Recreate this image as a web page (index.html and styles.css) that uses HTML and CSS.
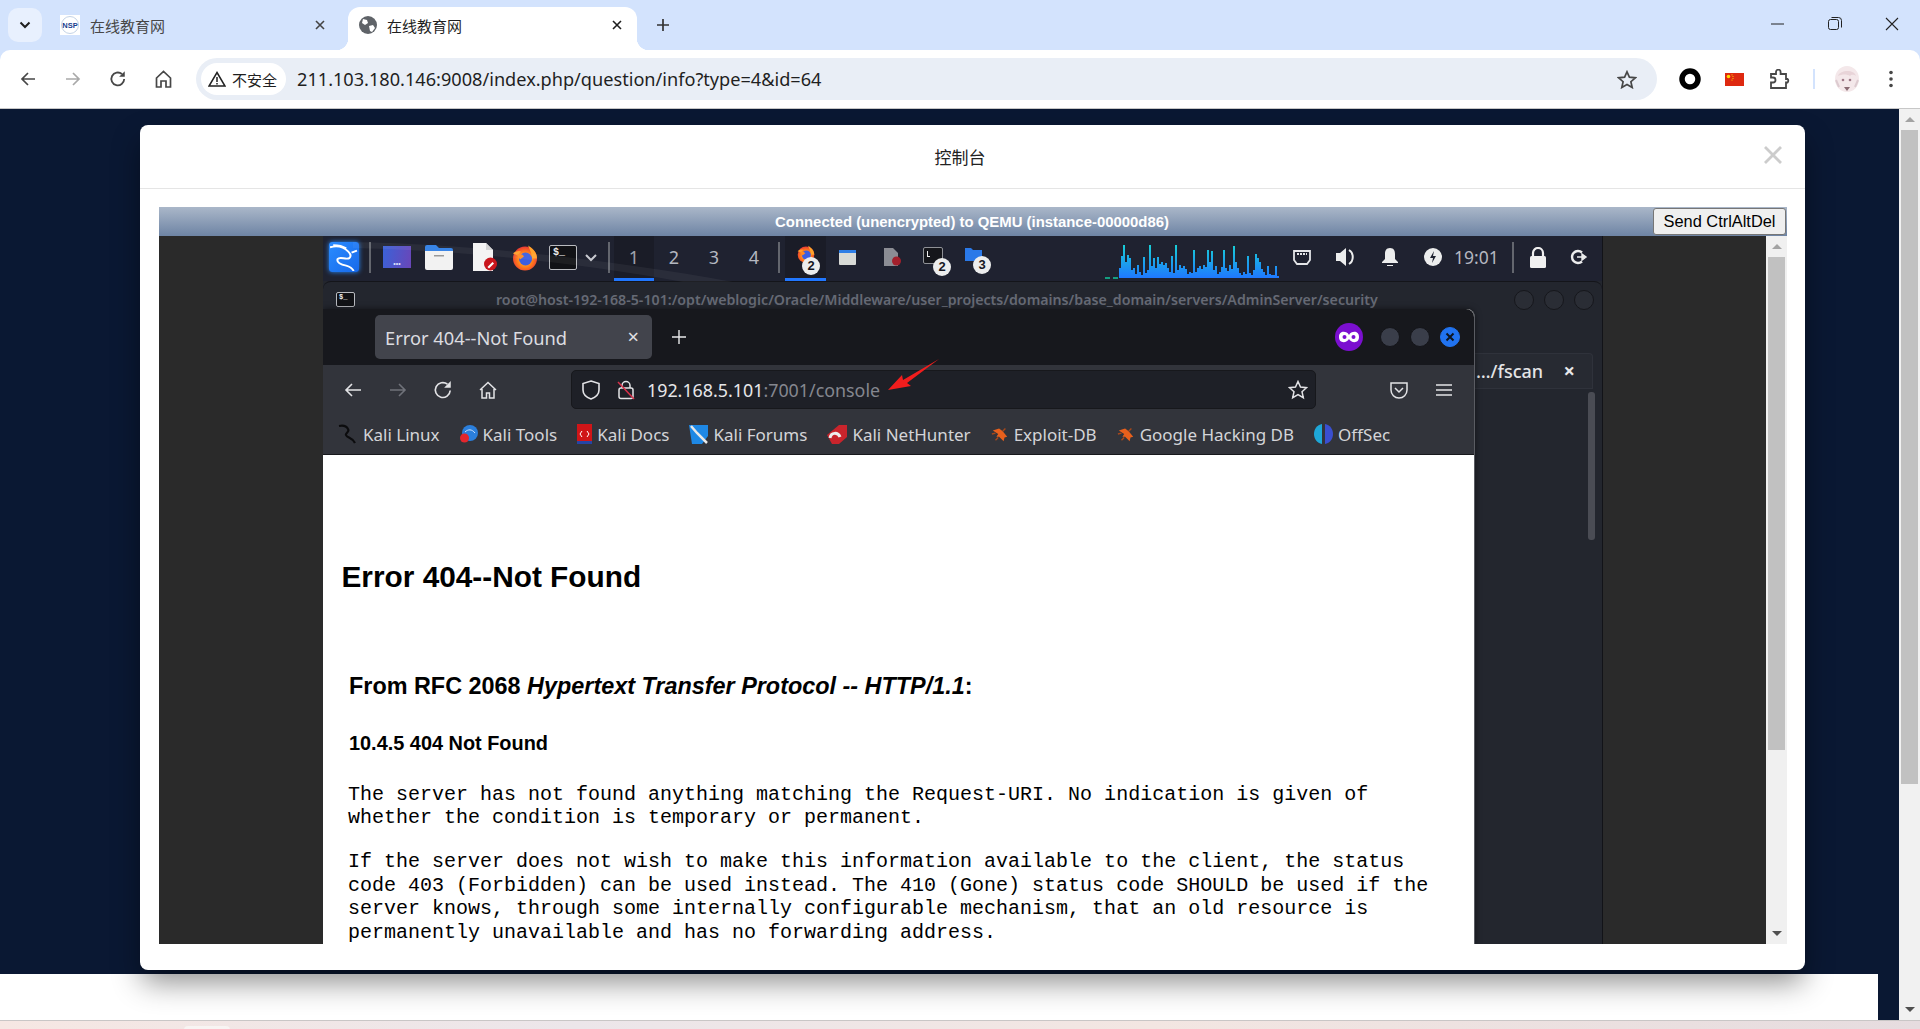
FILE: index.html
```html
<!DOCTYPE html>
<html lang="zh">
<head>
<meta charset="utf-8">
<title>在线教育网</title>
<link rel="stylesheet" href="styles.css">
</head>
<body>
<svg class="defs" width="0" height="0" aria-hidden="true">
  <defs>
    <radialGradient id="ffg" cx="0.5" cy="0.55" r="0.6">
      <stop offset="0" stop-color="#ffd43a"/><stop offset="0.55" stop-color="#ff7a1a"/><stop offset="1" stop-color="#e5283c"/>
    </radialGradient>
    <linearGradient id="bar" gradientUnits="userSpaceOnUse" x1="0" y1="0" x2="0" y2="33">
      <stop offset="0" stop-color="#18cfd6"/><stop offset="1" stop-color="#1f78ff"/>
    </linearGradient>
    <symbol id="ff" viewBox="0 0 26 26">
      <circle cx="13" cy="14" r="12" fill="url(#ffg)"/>
      <path d="M16 1c5 3 9 7 9 13h-5c0-5-2-8-4-13z" fill="#ffa32b"/>
      <path d="M1 9c2-2 5-3 8-2l-3 4z" fill="#ff9d2b"/>
      <circle cx="13.500" cy="14.500" r="6.500" fill="#3c5ee0"/>
      <path d="M5 10c3-1 6 0 7 2l-4 3z" fill="#ff8a22"/>
    </symbol>
    <symbol id="knife" viewBox="0 0 20 20">
      <path d="M2 6l7-2 4 3 5 6-3 1-1 4-5-5-3 0 2-3z" fill="#e8601c"/>
      <path d="M5 9l-4 1M13 7l3-3M8 14l-3 3" stroke="#a8481a" stroke-width="1.500" fill="none"/>
    </symbol>
  </defs>
</svg>

<div class="chrome-top">
<div class="tabstrip">
  <button class="tablist" aria-label="tabs">
    <svg width="12" height="8" viewBox="0 0 12 8"><path d="M1.500 1.500L6 6l4.500-4.500" fill="none" stroke="#1f1f1f" stroke-width="2"/></svg>
  </button>
  <div class="tab">
    <svg class="favicon" width="20" height="20" viewBox="0 0 20 20"><rect width="20" height="20" fill="#fff"/><circle cx="10" cy="10" r="8.500" fill="none" stroke="#c4d3e6"/><text x="10" y="13" text-anchor="middle" class="nsp">NSP</text></svg>
    <span class="tab-title">在线教育网</span>
    <svg class="tab-x" width="10" height="10" viewBox="0 0 10 10"><path d="M1 1l8 8M9 1l-8 8" stroke="#444" stroke-width="1.600"/></svg>
  </div>
  <div class="tab tab-active">
    <svg class="globe" width="18" height="18" viewBox="0 0 18 18"><circle cx="9" cy="9" r="9" fill="#5f6368"/><path d="M4 3l4 1 1 3-3 2-3-2zM10 10l4-1 2 3-3 4-2-1z" fill="#fff"/></svg>
    <span class="tab-title tab-title-active">在线教育网</span>
    <svg class="tab-x" width="10" height="10" viewBox="0 0 10 10"><path d="M1 1l8 8M9 1l-8 8" stroke="#1f1f1f" stroke-width="1.600"/></svg>
  </div>
  <div class="newtab">
    <svg width="14" height="14" viewBox="0 0 14 14"><path d="M7 1v12M1 7h12" stroke="#333" stroke-width="1.700"/></svg>
  </div>
  <div class="win-controls">
    <div class="win-btn"><svg width="13" height="2" viewBox="0 0 13 2"><path d="M0 1h13" stroke="#222" stroke-width="1"/></svg></div>
    <div class="win-btn"><svg width="14" height="14" viewBox="0 0 14 14"><rect x="0.500" y="2.500" width="10" height="10" rx="2" fill="none" stroke="#222"/><path d="M3.500 0.500h7a3 3 0 0 1 3 3v7" fill="none" stroke="#222"/></svg></div>
    <div class="win-btn"><svg width="14" height="14" viewBox="0 0 14 14"><path d="M1 1l12 12M13 1L1 13" stroke="#222" stroke-width="1.100"/></svg></div>
  </div>
</div>

<div class="toolbar">
  <div class="tb-btn"><svg width="16" height="16" viewBox="0 0 16 16"><path d="M15 8H2M8 2L2 8l6 6" fill="none" stroke="#474747" stroke-width="1.700"/></svg></div>
  <div class="tb-btn"><svg width="16" height="16" viewBox="0 0 16 16"><path d="M1 8h13M8 2l6 6-6 6" fill="none" stroke="#a9a9a9" stroke-width="1.700"/></svg></div>
  <div class="tb-btn"><svg width="18" height="18" viewBox="0 0 16 16"><path d="M13.500 8A5.700 5.700 0 1 1 11.500 3.600" fill="none" stroke="#474747" stroke-width="1.600"/><path d="M14 1v5H9z" fill="#474747"/></svg></div>
  <div class="tb-btn"><svg width="17" height="18" viewBox="0 0 17 18"><path d="M1.500 8L8.500 1.500 15.500 8v9h-4.500v-6H6v6H1.500z" fill="none" stroke="#474747" stroke-width="1.700"/></svg></div>
  <div class="omnibox">
    <div class="security">
      <svg width="18" height="16" viewBox="0 0 18 16"><path d="M9 1.500L17 15H1z" fill="none" stroke="#222" stroke-width="1.500"/><path d="M9 6v5M9 12v1.500" stroke="#222" stroke-width="1.500"/></svg>
      <span class="security-text">不安全</span>
    </div>
    <span class="url">211.103.180.146:9008/index.php/question/info?type=4&amp;id=64</span>
    <svg class="omni-star" width="20" height="19" viewBox="0 0 20 19"><path d="M10 1.800l2.400 5.400 5.900.6-4.400 3.900 1.300 5.800L10 14.500l-5.200 3 1.300-5.800L1.700 7.800l5.900-.6z" fill="none" stroke="#474747" stroke-width="1.700"/></svg>
  </div>
  <div class="tb-btn tb-first"><svg width="22" height="22" viewBox="0 0 22 22"><circle cx="11" cy="11" r="8" fill="none" stroke="#000" stroke-width="5.500"/></svg></div>
  <div class="tb-btn"><svg width="19" height="13" viewBox="0 0 19 13"><rect width="19" height="13" fill="#de2910"/><circle cx="3.500" cy="3.500" r="1.800" fill="#ffde00"/><circle cx="7" cy="1.800" r=".6" fill="#ffde00"/><circle cx="8" cy="3.500" r=".6" fill="#ffde00"/><circle cx="8" cy="5.500" r=".6" fill="#ffde00"/><circle cx="7" cy="7" r=".6" fill="#ffde00"/></svg></div>
  <div class="tb-btn"><svg width="21" height="21" viewBox="0 0 21 21"><path d="M2 5h5V3a2.300 2.300 0 0 1 4.600 0v2h5.400v5h1.500a2.300 2.300 0 0 1 0 3.500H17v5.500H2v-5.500h2a2.500 2.500 0 0 0 0-5H2z" fill="none" stroke="#474747" stroke-width="1.800"/></svg></div>
  <div class="tb-sep"><span class="tb-sep-line"></span></div>
  <div class="tb-avatar">
    <svg width="24" height="26" viewBox="0 0 24 26"><ellipse cx="12" cy="13" rx="12" ry="13" fill="#f4e8ea"/><path d="M3 10c2-6 16-7 18 0-3-2-5-1-6 0-3-2-8-2-12 0z" fill="#e8d4d8"/><circle cx="8" cy="14" r="1.300" fill="#a07a88"/><circle cx="15" cy="14" r="1.300" fill="#a07a88"/><path d="M9 21l3 4 3-4z" fill="#8a6a72"/><path d="M1 14l3 7M23 14l-3 7" stroke="#ddcbd0" stroke-width="2"/></svg>
  </div>
  <div class="tb-btn"><svg width="4" height="18" viewBox="0 0 4 18"><circle cx="2" cy="2.500" r="1.800" fill="#474747"/><circle cx="2" cy="9" r="1.800" fill="#474747"/><circle cx="2" cy="15.500" r="1.800" fill="#474747"/></svg></div>
</div>
</div>

<div class="viewport">
  <div class="page-main">
    <div class="page-navy"></div>
    <div class="page-foot"></div>

    <section class="modal">
      <header class="modal-head">
        <h1 class="modal-title">控制台</h1>
        <svg class="modal-close" width="18" height="18" viewBox="0 0 18 18"><path d="M1 1l16 16M17 1L1 17" stroke="#ccc" stroke-width="2.800"/></svg>
      </header>
      <div class="modal-body">
        <div class="console">
          <div class="console-bar">
            <span class="console-status">Connected (unencrypted) to QEMU (instance-00000d86)</span>
            <button class="cad">Send CtrlAltDel</button>
          </div>
          <div class="console-stage">
            <div class="screen">
              <svg class="swoosh" width="420" height="46" viewBox="0 0 420 46"><path d="M0 6C120 8 260 24 380 46H330C230 28 110 14 0 12z" fill="#fff" opacity=".05"/></svg>
              <div class="panel">
                <div class="kali-btn p-kali"><svg width="28" height="28" viewBox="0 0 26 26"><path d="M0 4c7-2 13 0 17 4 2 2 3 4 1 6-3 2-9-2-11 1-1 3 3 5 8 6 4 1 6 3 7 5M3 2c5 0 9 1 12 3M20 9l5-2" fill="none" stroke="#fff" stroke-width="1.800"/></svg></div>
                <span class="p-sep p-sep1"></span>
                <div class="appmenu"><span class="appmenu-dots">•••</span></div>
                <svg class="p-folder" width="28" height="26" viewBox="0 0 28 26"><path d="M0 3a2 2 0 0 1 2-2h9l3 3h12a2 2 0 0 1 2 2v2H0z" fill="#2f7fe6"/><path d="M0 7h28v17a2 2 0 0 1-2 2H2a2 2 0 0 1-2-2z" fill="#f2f2f2"/><rect x="9" y="11" width="10" height="1.500" fill="#999"/></svg>
                <svg class="p-doc" width="26" height="28" viewBox="0 0 26 28"><path d="M1 0h13l7 7v21H1z" fill="#f4f4f4"/><path d="M14 0l7 7h-7z" fill="#d4d4d4"/><circle cx="18.500" cy="21" r="6.500" fill="#c9161d"/><path d="M15.500 24l5-5 1.500 1.500-5 5z" fill="#fff"/></svg>
                <svg class="p-ff" width="26" height="27"><use href="#ff"/></svg>
                <div class="term-icon p-term"><span class="term-prompt">$_</span></div>
                <svg class="p-chev" width="14" height="14" viewBox="0 0 14 14"><path d="M2 5l5 5 5-5" fill="none" stroke="#c8cad0" stroke-width="2"/></svg>
                <span class="p-sep p-sep2"></span>
                <div class="workspaces">
                  <span class="ws ws-active">1</span>
                  <span class="ws">2</span>
                  <span class="ws">3</span>
                  <span class="ws">4</span>
                </div>
                <span class="p-sep p-sep3"></span>
                <div class="task task-ff">
                  <svg class="task-ff-icon" width="18" height="18"><use href="#ff"/></svg>
                  <span class="badge badge-ff">2</span>
                </div>
                <svg class="t-window" width="17" height="15" viewBox="0 0 17 15"><rect width="17" height="15" rx="1" fill="#d8dad6"/><rect width="17" height="3" fill="#2f7fe6"/></svg>
                <svg class="t-doc" width="17" height="18" viewBox="0 0 17 18"><path d="M0 0h9l5 5v13H0z" fill="#8b8d94"/><circle cx="12.500" cy="13" r="4.500" fill="#a3202c"/></svg>
                <div class="task t-term">
                  <div class="term-mini"><span class="term-mini-p"></span></div>
                  <span class="badge badge-term">2</span>
                </div>
                <div class="task t-folder">
                  <svg width="17" height="14" viewBox="0 0 17 14"><path d="M0 1h6l2 2h9v11H0z" fill="#2a79e8"/></svg>
                  <span class="badge badge-folder">3</span>
                </div>
                <svg class="graph" width="175" height="34" viewBox="0 0 175 34">
                  <path d="M0 33h5M8 33h5" stroke="#12c79a" stroke-width="1.600"/>
                  <g transform="translate(14 0)">
                    <path fill="none" stroke="url(#bar)" stroke-width="2" d="M1 33v-10m2 10v-22m2 22v-33m2 33v-16m2 16v-23m2 23v-20m2 20v-8m2 8v-10m2 10v-4m2 4v-13m2 13v-6m2 6v-3m2 3v-21m2 21v-5m2 5v-8m2 8v-33m2 33v-12m2 12v-20m2 20v-10m2 10v-21m2 21v-14m2 14v-16m2 16v-13m2 13v-15m2 15v-10m2 10v-6m2 6v-22m2 22v-5m2 5v-33m2 33v-8m2 8v-13m2 13v-10m2 10v-12m2 12v-9m2 9v-4m2 4v-6m2 6v-5m2 5v-28m2 28v-6m2 6v-10m2 10v-12m2 12v-9m2 9v-13m2 13v-11m2 11v-28m2 28v-16m2 16v-27m2 27v-8m2 8v-12m2 12v-4m2 4v-6m2 6v-11m2 11v-28m2 28v-10m2 10v-7m2 7v-13m2 13v-9m2 9v-32m2 32v-16m2 16v-10m2 10v-5m2 5v-3m2 3v-6m2 6v-4m2 4v-22m2 22v-5m2 5v-3m2 3v-8m2 8v-24m2 24v-20m2 20v-16m2 16v-9m2 9v-6m2 6v-3m2 3v-12m2 12v-4m2 4v-3m2 3v-3m2 3v-12m2 12v-2"/>
                  </g>
                </svg>
                <svg class="s-net" width="18" height="15" viewBox="0 0 18 15"><path d="M1 1h16v9l-3 4H4l-3-4z" fill="none" stroke="#e4e5e8" stroke-width="1.800"/><path d="M4 4h10" stroke="#e4e5e8" stroke-width="2" stroke-dasharray="2 1"/></svg>
                <svg class="s-vol" width="22" height="20" viewBox="0 0 22 20"><path d="M0 6h4l6-5v18l-6-5H0z" fill="#eceded"/><path d="M13 3c5 3 5 11 0 14" fill="none" stroke="#eceded" stroke-width="2"/></svg>
                <svg class="s-bell" width="18" height="20" viewBox="0 0 18 20"><path d="M9 1c4 0 5 3 5 6v5l3 3v1H1v-1l3-3V7c0-3 1-6 5-6z" fill="#eceded"/><path d="M6 18h6v1H6z" fill="#eceded"/></svg>
                <svg class="s-power" width="18" height="18" viewBox="0 0 18 18"><circle cx="9" cy="9" r="9" fill="#eceded"/><path d="M10 3L6 10h3l-1 5 4-7H9z" fill="#1f2230"/></svg>
                <span class="clock">19:01</span>
                <span class="p-sep p-sep4"></span>
                <svg class="s-lock" width="16" height="21" viewBox="0 0 16 21"><path d="M3 9V6a5 5 0 0 1 10 0v3" fill="none" stroke="#f0f0f0" stroke-width="2.200"/><rect y="9" width="16" height="12" rx="1.500" fill="#f0f0f0"/></svg>
                <svg class="s-out" width="18" height="16" viewBox="0 0 18 16"><path d="M12 3.500A6 6 0 1 0 12 12.500" fill="none" stroke="#eceded" stroke-width="2.400"/><path d="M7 8h7M12 5l4 3-4 3z" fill="#eceded" stroke="#eceded" stroke-width="1.400"/></svg>
              </div>

              <div class="terminal">
                <div class="term-title">
                  <div class="term-icon term-icon-small"><span class="term-prompt term-prompt-small">$_</span></div>
                  <span class="term-title-text">root@host-192-168-5-101:/opt/weblogic/Oracle/Middleware/user_projects/domains/base_domain/servers/AdminServer/security</span>
                  <div class="term-dots">
                    <span class="term-dot"></span><span class="term-dot"></span><span class="term-dot"></span>
                  </div>
                </div>
                <div class="term-tabs">
                  <div class="term-tab"><span>…/fscan</span><span class="term-tab-x">×</span></div>
                </div>
                <span class="term-scroll"></span>
              </div>

              <div class="firefox">
                <div class="ff-tabs">
                  <div class="ff-tab"><span class="ff-tab-title">Error 404--Not Found</span><span class="ff-tab-x">×</span></div>
                  <svg class="ff-plus" width="14" height="14" viewBox="0 0 14 14"><path d="M7 0v14M0 7h14" stroke="#e8e8ea" stroke-width="1.400"/></svg>
                  <div class="ff-controls">
                    <svg class="ff-mask" width="28" height="28" viewBox="0 0 28 28"><circle cx="14" cy="14" r="14" fill="#7b0fd0"/><path d="M4 14c0-7 8-6 10-2 2-4 10-5 10 2s-8 6-10 2c-2 4-10 5-10-2z" fill="#fff"/><circle cx="9.500" cy="14" r="2" fill="#7b0fd0"/><circle cx="18.500" cy="14" r="2" fill="#7b0fd0"/></svg>
                    <span class="ff-dot"></span><span class="ff-dot"></span>
                    <span class="ff-dot ff-dot-close"><svg width="10" height="10" viewBox="0 0 10 10"><path d="M1.500 1.500l7 7M8.500 1.500l-7 7" stroke="#0d1520" stroke-width="2"/></svg></span>
                  </div>
                </div>
                <div class="ff-nav">
                  <div class="ff-btn"><svg width="18" height="16" viewBox="0 0 18 16"><path d="M17 8H2M8 2L2 8l6 6" fill="none" stroke="#e3e3e6" stroke-width="1.600"/></svg></div>
                  <div class="ff-btn"><svg width="18" height="16" viewBox="0 0 18 16"><path d="M1 8h15M10 2l6 6-6 6" fill="none" stroke="#70727a" stroke-width="1.600"/></svg></div>
                  <div class="ff-btn"><svg width="20" height="20" viewBox="0 0 18 18"><path d="M15.500 9.500A6.700 6.700 0 1 1 13 3.800" fill="none" stroke="#e3e3e6" stroke-width="1.500"/><path d="M16 1v6h-6z" fill="#e3e3e6"/></svg></div>
                  <div class="ff-btn"><svg width="18" height="18" viewBox="0 0 18 18"><path d="M1 9l8-7.500L17 9M3 8v9h4.500v-5h3v5H15V8" fill="none" stroke="#e3e3e6" stroke-width="1.500"/></svg></div>
                  <div class="ff-url">
                    <svg class="ff-shield" width="18" height="20" viewBox="0 0 18 20"><path d="M9 1l8 2.500V10c0 4.500-4 7.500-8 9-4-1.500-8-4.500-8-9V3.500z" fill="none" stroke="#e3e3e6" stroke-width="1.600"/></svg>
                    <svg class="ff-lock" width="18" height="20" viewBox="0 0 18 20"><path d="M5 8V5.500a4 4 0 0 1 8 0V8" fill="none" stroke="#e3e3e6" stroke-width="1.500"/><rect x="2" y="8" width="14" height="10.500" rx="2" fill="none" stroke="#e3e3e6" stroke-width="1.500"/><path d="M1 2l16 17" stroke="#d9304a" stroke-width="1.500"/></svg>
                    <span class="ff-host">192.168.5.101<span class="ff-port">:7001/console</span></span>
                    <svg class="ff-star" width="20" height="20" viewBox="0 0 20 20"><path d="M10 1.500l2.500 5.600 6 .6-4.500 4 1.300 6L10 14.600l-5.300 3.100 1.300-6-4.500-4 6-.6z" fill="none" stroke="#e3e3e6" stroke-width="1.500"/></svg>
                  </div>
                  <svg class="ff-pocket" width="18" height="18" viewBox="0 0 18 18"><path d="M1 2h16v7a8 8 0 0 1-16 0z" fill="none" stroke="#e3e3e6" stroke-width="1.500"/><path d="M5 7l4 4 4-4" fill="none" stroke="#e3e3e6" stroke-width="1.500"/></svg>
                  <svg class="ff-menu" width="16" height="14" viewBox="0 0 16 14"><path d="M0 2h16M0 7h16M0 12h16" stroke="#e3e3e6" stroke-width="1.600"/></svg>
                </div>
                <div class="ff-marks">
                  <div class="mark"><svg width="20" height="20" viewBox="0 0 20 20"><path d="M1 2c5-1 8 1 9 3 2 3-3 4-2 6 1 3 6 2 9 8" fill="none" stroke="#0c0c0e" stroke-width="2.200"/></svg><span>Kali Linux</span></div>
                  <div class="mark"><svg width="18" height="18" viewBox="0 0 18 18"><circle cx="10" cy="8" r="8" fill="#2b7fdc"/><path d="M5 7c3-3 7-3 10 1" fill="none" stroke="#cfe4ff"/><circle cx="4.500" cy="13" r="4.500" fill="#e3262d"/></svg><span>Kali Tools</span></div>
                  <div class="mark"><svg width="15" height="20" viewBox="0 0 15 20"><rect width="15" height="19" fill="#d01518"/><rect y="17" width="15" height="3" fill="#2545a5"/><path d="M5 7l-2 3 2 3M10 7l2 3-2 3" fill="none" stroke="#fff"/></svg><span>Kali Docs</span></div>
                  <div class="mark"><svg width="19" height="19" viewBox="0 0 19 19"><path d="M0 0h19v11l-6 8H3z" fill="#1e88e5"/><path d="M2 1l6 7 10 10" fill="none" stroke="#e8e8e8" stroke-width="2.500"/></svg><span>Kali Forums</span></div>
                  <div class="mark"><svg width="20" height="19" viewBox="0 0 20 19"><path d="M0 10L12 0h8v12L12 19H5z" fill="#c9242c"/><path d="M3 13c1-6 8-6 10-1" fill="none" stroke="#eee" stroke-width="3"/></svg><span>Kali NetHunter</span></div>
                  <div class="mark"><svg width="18" height="18"><use href="#knife"/></svg><span>Exploit-DB</span></div>
                  <div class="mark"><svg width="18" height="18"><use href="#knife"/></svg><span>Google Hacking DB</span></div>
                  <div class="mark"><svg width="19" height="20" viewBox="0 0 19 20"><path d="M8 0v20C3 19 0 15 0 10S3 1 8 0z" fill="#1ea7d8"/><path d="M11 0v20c5-1 8-5 8-10S16 1 11 0z" fill="#3a4fd0"/></svg><span>OffSec</span></div>
                </div>
                <article class="ff-page">
                  <h1 class="err-h1">Error 404--Not Found</h1>
                  <h2 class="err-h2">From RFC 2068 <em>Hypertext Transfer Protocol -- HTTP/1.1</em>:</h2>
                  <h3 class="err-h3">10.4.5 404 Not Found</h3>
                  <pre class="err-p">The server has not found anything matching the Request-URI. No indication is given of
whether the condition is temporary or permanent.</pre>
                  <pre class="err-p err-p2">If the server does not wish to make this information available to the client, the status
code 403 (Forbidden) can be used instead. The 410 (Gone) status code SHOULD be used if the
server knows, through some internally configurable mechanism, that an old resource is
permanently unavailable and has no forwarding address.</pre>
                </article>
              </div>

              <svg class="annot" width="60" height="36" viewBox="0 0 60 36"><path d="M2 32L16 17l1 5L53 1 21 25l4 3z" fill="#f21d1d"/></svg>
            </div>
            <div class="stage-scroll">
              <span class="arrow-up"></span>
              <span class="stage-thumb"></span>
              <span class="arrow-down"></span>
            </div>
          </div>
        </div>
      </div>
    </section>
  </div>
  <div class="page-scroll">
    <span class="arrow-up"></span>
    <span class="page-thumb"></span>
    <span class="arrow-down"></span>
  </div>
</div>
<div class="taskbar"><span class="taskbar-tip"></span></div>
</body>
</html>
```
FILE: styles.css
```css
* { box-sizing: border-box; }
html, body { margin: 0; padding: 0; height: 1029px; overflow: hidden; background: #fff; }
body { font-family: "Noto Sans", "Noto Sans CJK SC", sans-serif; color: #1f1f1f; }
.defs { position: absolute; }
h1, h2, h3, pre { margin: 0; }

/* Chrome tab strip */
.chrome-top { background: #d3e3fd; }
.tabstrip { height: 50px; display: flex; align-items: flex-end; }
.tablist { width: 34px; height: 34px; margin: 0 6px 8px 8px; border: 0; padding: 0; border-radius: 10px; background: #e8f0fe; display: flex; align-items: center; justify-content: center; }
.tab { width: 292px; height: 43px; display: flex; align-items: center; padding: 0 15px 7px 12px; position: relative; }
.favicon { margin-right: 10px; flex: none; }
.nsp { font: 800 7.5px "Liberation Sans", sans-serif; fill: #17408f; }
.tab-title { font-size: 15px; color: #474747; flex: 1; font-family: "Noto Sans CJK SC", sans-serif; }
.tab-title-active { color: #1f1f1f; }
.tab-x { flex: none; }
.tab-active { width: 289px; background: #fff; border-radius: 12px 12px 0 0; margin-left: 8px; padding: 0 15px 7px 11px; }
.tab-active::before, .tab-active::after { content: ""; position: absolute; bottom: 0; width: 12px; height: 12px; }
.tab-active::before { left: -12px; background: radial-gradient(circle at 0 0, #d3e3fd 12px, #fff 12.5px); }
.tab-active::after { right: -12px; background: radial-gradient(circle at 100% 0, #d3e3fd 12px, #fff 12.5px); }
.globe { margin-right: 10px; flex: none; }
.newtab { width: 52px; height: 43px; display: flex; align-items: center; justify-content: center; padding-bottom: 7px; }
.win-controls { margin-left: auto; display: flex; height: 50px; }
.win-btn { width: 57px; display: flex; align-items: center; justify-content: center; padding-bottom: 2px; }

/* Chrome toolbar */
.toolbar { height: 59px; background: #fff; border-radius: 10px 10px 0 0; border-bottom: 1px solid #c7c7c7; display: flex; align-items: center; padding-left: 5.500px; position: relative; }
.tb-btn { width: 45px; height: 42px; display: flex; align-items: center; justify-content: center; flex: none; }
.omnibox { width: 1461px; height: 42px; margin-left: 10.500px; border-radius: 21px; background: #e9eef6; display: flex; align-items: center; padding: 0 20px 0 5px; flex: none; }
.security { width: 85px; height: 32px; border-radius: 16px; background: #fff; display: flex; align-items: center; padding-left: 7px; gap: 6px; flex: none; }
.security-text { font: 15px "Noto Sans CJK SC", sans-serif; color: #1f1f1f; }
.url { margin-left: 11px; font-size: 18.150px; color: #1f1f1f; white-space: nowrap; flex: 1; }
.omni-star { flex: none; }
.tb-first { margin-left: 10px; }
.tb-sep { width: 24px; display: flex; justify-content: center; flex: none; }
.tb-sep-line { width: 2px; height: 20px; background: #d3e3fd; }
.tb-avatar { width: 42px; display: flex; justify-content: center; flex: none; }

/* Page */
.viewport { height: 911px; display: flex; }
.page-main { flex: 1; position: relative; background: #0a1833; display: flex; flex-direction: column; }
.page-navy { height: 865px; }
.page-foot { flex: 1; background: #fff; margin-right: 21px; }
.page-scroll { width: 21px; background: #f1f1f1; display: flex; flex-direction: column; align-items: center; position: relative; }
.page-thumb { position: absolute; left: 2px; top: 21px; width: 17px; height: 654px; background: #c1c1c1; }
.arrow-up, .arrow-down { position: absolute; left: 50%; margin-left: -5px; width: 0; height: 0; border-left: 5px solid transparent; border-right: 5px solid transparent; }
.arrow-up { top: 8px; border-bottom: 5px solid #a3a3a3; }
.arrow-down { bottom: 8px; border-top: 5px solid #505050; }

/* Modal */
.modal { position: absolute; left: 140px; top: 16px; width: 1665px; height: 845px; background: #fff; border-radius: 8px; box-shadow: 0 14px 30px -2px rgba(0,0,0,.45); display: flex; flex-direction: column; }
.modal-head { height: 64px; border-bottom: 1px solid #e5e5e5; display: flex; align-items: center; justify-content: center; padding-right: 25px; position: relative; }
.modal-title { font: 400 17px "Noto Sans CJK SC", sans-serif; color: #222; }
.modal-close { position: absolute; right: 23px; top: 21px; }
.modal-body { flex: 1; padding: 18px 18px 26px 19px; }
.console { height: 737px; display: flex; flex-direction: column; }
.console-bar { height: 29px; flex: none; background: linear-gradient(#aab7c9, #6e84a4); display: flex; align-items: center; justify-content: center; padding-right: 2px; position: relative; }
.console-status { font: 700 14.900px "Liberation Sans", sans-serif; color: #fff; }
.cad { position: absolute; right: 1px; top: 1px; width: 133px; height: 27px; padding: 0; font: 16.400px "Liberation Sans", sans-serif; color: #000; background: #efefef; border: 1px solid #767676; border-radius: 3px; }
.console-stage { flex: 1; display: flex; background: #2a2a2a; min-height: 0; }
.stage-scroll { width: 21px; margin-left: auto; background: #f0f0f0; position: relative; }
.stage-thumb { position: absolute; left: 2px; top: 21px; width: 17px; height: 493px; background: #c1c1c1; }

/* VNC desktop */
.screen { width: 1280px; height: 708px; margin-left: 164px; position: relative; overflow: hidden; background: #23262e; border-right: 1px solid #121318; flex: none; }
.swoosh { position: absolute; left: 30px; top: 0; z-index: 1; pointer-events: none; }
.panel { height: 45px; background: #1f2230; display: flex; align-items: center; color: #c8cad0; padding-bottom: 3px; }
.kali-btn { width: 30px; height: 30px; border-radius: 3px; background: linear-gradient(135deg, #2a8cff, #1769ea); box-shadow: 0 0 5px #2a8cff; display: flex; align-items: center; justify-content: center; flex: none; }
.p-kali { margin-left: 6px; }
.p-sep { width: 2px; height: 31px; background: #63666e; flex: none; }
.p-sep1 { margin-left: 10px; }
.appmenu { width: 28px; height: 22px; margin-left: 12px; background: linear-gradient(100deg, #3a62d8, #6a46b8); display: flex; align-items: flex-end; justify-content: center; flex: none; }
.appmenu-dots { font: 7px/8px "Liberation Sans", sans-serif; color: #dfe4ff; }
.p-folder { margin-left: 14px; flex: none; }
.p-doc { margin-left: 19px; flex: none; }
.p-ff { margin-left: 14px; flex: none; }
.term-icon { width: 28px; height: 25px; background: #111216; border: 1px solid #b9bbc0; border-radius: 2px; flex: none; }
.p-term { margin-left: 11px; }
.term-prompt { display: block; font: 700 10px/14px "Liberation Mono", monospace; color: #eee; padding-left: 3px; }
.p-chev { margin-left: 7px; flex: none; }
.p-sep2 { margin-left: 10px; }
.workspaces { display: flex; margin-left: 4px; height: 45px; flex: none; align-self: flex-start; }
.ws { width: 40px; height: 45px; display: flex; align-items: center; justify-content: center; font-size: 18px; color: #b4b7c0; padding-bottom: 3px; }
.ws-active { background: #1a1c27; border-bottom: 3px solid #2177ff; color: #9fa3ad; padding-bottom: 0; }
.p-sep3 { margin-left: 4px; }
.task { position: relative; flex: none; display: flex; }
.task-ff { width: 41px; height: 45px; margin-left: 5px; background: #1a1c27; border-bottom: 3px solid #2177ff; align-self: flex-start; }
.task-ff-icon { position: absolute; left: 12px; top: 9px; }
.badge { position: absolute; width: 18px; height: 18px; border-radius: 50%; background: #eceded; color: #16181f; font: 700 13px/18px "Liberation Sans", sans-serif; text-align: center; }
.badge-ff { left: 17px; top: 21px; }
.t-window { margin-left: 13px; flex: none; }
.t-doc { margin-left: 28px; flex: none; }
.t-term { width: 20px; height: 20px; margin-left: 22px; }
.term-mini { width: 20px; height: 17px; background: #15161b; border: 1px solid #8f9196; border-radius: 2px; position: relative; }
.term-mini-p { position: absolute; left: 3px; top: 3px; width: 3px; height: 6px; border-left: 1px solid #eee; border-bottom: 1px solid #eee; }
.badge-term { left: 10px; top: 11px; }
.t-folder { width: 17px; height: 20px; margin-left: 22px; }
.badge-folder { left: 8px; top: 9px; }
.graph { margin-left: 123px; margin-top: 9px; flex: none; }
.s-net { margin-left: 13px; flex: none; }
.s-vol { margin-left: 25px; flex: none; }
.s-bell { margin-left: 23px; flex: none; }
.s-power { margin-left: 25px; flex: none; }
.clock { margin-left: 12px; font-size: 17.500px; color: #b4b7c0; width: 42px; white-space: nowrap; flex: none; }
.p-sep4 { margin-left: 16px; }
.s-lock { margin-left: 16px; flex: none; }
.s-out { margin-left: 24px; flex: none; }

/* Terminal window, behind Firefox */
.terminal { position: absolute; left: 0; top: 45px; width: 1279px; bottom: 0; background: #23262e; border-radius: 8px 8px 0 0; border-top: 1px solid #14151a; }
.term-title { height: 37px; display: flex; align-items: center; position: relative; padding: 0 0 2px 13px; }
.term-icon-small { width: 19px; height: 15px; }
.term-prompt-small { font-size: 7px; line-height: 9px; padding-left: 2px; }
.term-title-text { position: absolute; left: 173px; top: 8px; font-size: 14.200px; font-weight: 600; color: #666a75; white-space: nowrap; }
.term-dots { position: absolute; right: 8px; top: 8px; display: flex; gap: 10px; }
.term-dot { width: 20px; height: 20px; border-radius: 50%; background: #2a2d35; border: 1px solid #16171c; }
.term-tabs { margin-top: 34px; padding-right: 9px; height: 36px; display: flex; justify-content: flex-end; }
.term-tab { width: 119px; height: 36px; background: #272a32; border: 1px solid #2f323b; border-left: 0; border-radius: 0 4px 0 0; display: flex; align-items: center; padding-left: 2px; font-size: 18px; font-weight: 500; color: #e4e4e6; }
.term-tab-x { margin-left: auto; margin-right: 17px; font-size: 20px; font-weight: 700; line-height: 1; color: #e8e8ea; }
.term-scroll { position: absolute; left: 1265px; top: 110px; width: 7px; height: 148px; border-radius: 3px; background: #4a4c54; }

/* Firefox window */
.firefox { position: absolute; left: 0; top: 73px; width: 1152px; bottom: 0; background: #fff; border-radius: 0 8px 0 0; border-right: 1px solid #5a5c62; display: flex; flex-direction: column; box-shadow: 0 0 6px rgba(0,0,0,.5); }
.ff-tabs { height: 56px; flex: none; background: #17181d; border-radius: 0 8px 0 0; display: flex; align-items: center; padding-left: 52px; }
.ff-tab { width: 277px; height: 44px; background: #42444c; border-radius: 5px; display: flex; align-items: center; padding: 0 13px 0 10px; }
.ff-tab-title { font-size: 18.300px; color: #dcdce0; white-space: nowrap; flex: 1; }
.ff-tab-x { color: #e0e0e3; font-size: 20px; line-height: 1; }
.ff-plus { margin-left: 20px; flex: none; }
.ff-controls { margin-left: auto; margin-right: 14px; display: flex; align-items: center; gap: 10px; }
.ff-mask { margin-right: 7px; }
.ff-dot { width: 20px; height: 20px; border-radius: 50%; background: #3a3e4a; border: 1px solid #14151a; }
.ff-dot-close { background: #2173f0; border-color: #2173f0; display: flex; align-items: center; justify-content: center; }
.ff-nav { height: 49px; flex: none; background: #32343b; display: flex; align-items: center; padding-left: 7px; }
.ff-btn { width: 45px; height: 39px; display: flex; align-items: center; justify-content: center; flex: none; }
.ff-url { width: 745px; height: 39px; margin-left: 61px; background: #1e2027; border: 1px solid #17181c; border-radius: 5px; display: flex; align-items: center; padding: 0 7px 0 10px; flex: none; }
.ff-shield { flex: none; }
.ff-lock { margin-left: 17px; flex: none; }
.ff-host { margin-left: 12px; font-size: 17.850px; color: #e6e6e9; white-space: nowrap; flex: 1; }
.ff-port { color: #85878f; }
.ff-star { flex: none; }
.ff-pocket { margin-left: 74px; flex: none; }
.ff-menu { margin-left: 28px; flex: none; }
.ff-marks { height: 41px; flex: none; background: #32343b; border-bottom: 1px solid #17181c; display: flex; align-items: center; padding-left: 15px; gap: 20px; }
.mark { display: flex; align-items: center; gap: 5px; font-size: 17px; color: #d4d4d8; white-space: nowrap; }

/* The 404 page */
.ff-page { flex: 1; min-height: 0; background: #fff; color: #000; font-family: "Liberation Sans", sans-serif; padding: 104px 0 0 25px; overflow: hidden; }
.err-h1 { margin-left: -6.500px; font-size: 29.800px; line-height: 36px; font-weight: 700; }
.err-h2 { margin: 77px 0 0 1px; font-size: 23.400px; line-height: 28px; font-weight: 700; white-space: nowrap; }
.err-h3 { margin: 31px 0 0 1px; font-size: 19.900px; line-height: 24px; font-weight: 700; }
.err-p { margin-top: 28px; font: 20px/23.400px "Liberation Mono", monospace; }
.err-p2 { margin-top: 20.500px; }

.annot { position: absolute; left: 563px; top: 122px; }
.taskbar { height: 9px; background: linear-gradient(90deg, #f6e7e3, #ece6ea 30%, #f3e6e2 60%, #e6dcdf); border-top: 1px solid #c9c6c6; position: relative; }
.taskbar-tip { position: absolute; left: 184px; top: 5px; width: 46px; height: 4px; background: #f8f4f3; border-radius: 4px 4px 0 0; }
```
